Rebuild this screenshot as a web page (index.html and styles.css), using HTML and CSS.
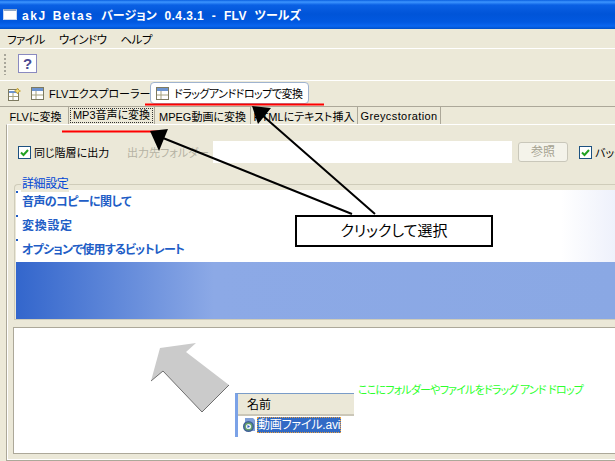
FILE: index.html
```html
<!DOCTYPE html>
<html lang="ja">
<head>
<meta charset="utf-8">
<title>akJ Betas</title>
<link rel="stylesheet" href="styles.css">
</head>
<body>
<div class="window">
  <header class="titlebar">
    <span class="app-icon"></span>
    <span class="title-text"><span class="latin">akJ Betas</span> <span class="kana">バージョン</span> 0.4.3.1 - FLV <span class="kana">ツールズ</span></span>
  </header>
  <nav class="menubar"><span>ファイル</span><span>ウインドウ</span><span>ヘルプ</span></nav>
  <div class="toolbar">
    <span class="grip"></span>
    <span class="help-btn">?</span>
  </div>
  <div class="main-tabs">
    <svg class="ico-new" width="13" height="13" viewBox="0 0 13 13"><rect x=".5" y="1.500" width="10" height="11" fill="#fff" stroke="#7d7a60"/><path d="M1 3h9v2H1z" fill="#6d94cf"/><path d="M1 8.500h9M5 5v7" stroke="#a5a17f"/><path d="M9.500 0l1 2 2 1-2 1-1 2-1-2-2-1 2-1z" fill="#f6e37a" stroke="#c09a2c" stroke-width=".7"/></svg>
    <span class="main-tab">
      <svg class="ico-table" width="13" height="13" viewBox="0 0 13 13"><rect x=".5" y=".5" width="12" height="12" fill="#fff" stroke="#7d7a60"/><rect x="1" y="1" width="11" height="3" fill="#6d94cf"/><path d="M1 8h11M5 4v8" stroke="#a5a17f"/></svg>
      FLVエクスプローラー
    </span>
    <span class="main-tab active">
      <svg class="ico-table" width="13" height="13" viewBox="0 0 13 13"><rect x=".5" y=".5" width="12" height="12" fill="#fff" stroke="#7d7a60"/><rect x="1" y="1" width="11" height="3" fill="#6d94cf"/><path d="M1 8h11M5 4v8" stroke="#a5a17f"/></svg>
      ドラッグアンドドロップで変換
    </span>
  </div>
  <div class="sub-tabs">
    <span class="sub-tab t1">FLVに変換</span>
    <span class="sub-tab t2"><span class="focus">MP3音声に変換</span></span>
    <span class="sub-tab t3">MPEG動画に変換</span>
    <span class="sub-tab t4">HTMLにテキスト挿入</span>
    <span class="sub-tab t5">Greycstoration</span>
  </div>
  <main class="panel">
    <div class="options">
      <label class="check c1"><span class="box"><svg width="9" height="9" viewBox="0 0 9 9"><path d="M1 4.500l2.500 2.500 4.500-5" fill="none" stroke="#21a121" stroke-width="2"/></svg></span>同じ階層に出力</label>
      <span class="out-label">出力先フォルダー</span>
      <span class="out-input"></span>
      <span class="browse">参照</span>
      <label class="check c2"><span class="box"><svg width="9" height="9" viewBox="0 0 9 9"><path d="M1 4.500l2.500 2.500 4.500-5" fill="none" stroke="#21a121" stroke-width="2"/></svg></span>バックアップ</label>
    </div>
    <section class="group">
      <div class="group-legend">詳細設定</div>
      <div class="group-body">
        <ul class="links">
          <li class="l1">音声のコピーに関して</li>
          <li class="l2">変換設定</li>
          <li class="l3">オプションで使用するビットレート</li>
        </ul>
        <div class="banner"></div>
      </div>
    </section>
    <section class="dropzone">
      <div class="file-list">
        <div class="list-head">名前</div>
        <div class="list-row">
          <svg width="14" height="16" viewBox="0 0 14 16"><path d="M3 1h8l2 2v11H3z" fill="#7f9fd8"/><circle cx="6.500" cy="9.500" r="5.500" fill="#3f5f98"/><circle cx="6.500" cy="9.500" r="4" fill="#63a06a"/><circle cx="6.500" cy="9.500" r="2.600" fill="#e8eef8"/><path d="M5.500 8l2.500 1.500L5.500 11z" fill="#2a5fc0"/></svg>
          <span class="file-name">動画ファイル.avi</span>
        </div>
      </div>
      <span class="drop-hint">ここにフォルダーやファイルをドラッグ アンド ドロップ</span>
    </section>
  </main>
</div>
<svg class="annotations" width="615" height="461" viewBox="0 0 615 461">
  <path d="M145 104.500H324M62 131.500H158" stroke="#f00" stroke-width="2" fill="none"/>
  <path d="M375 214L262 115M352 214L163 138" stroke="#000" stroke-width="2" fill="none"/>
  <path d="M252 106L271 108L258 124Z" fill="#000"/>
  <path d="M150 131L168 129L159 151Z" fill="#000"/>
  <path d="M160 348L196 343L186 352L229 385L202 412L163 371L151 381Z" fill="#cbcbcb"/>
  <path d="M229 385L202 412L163 371L151 381" fill="none" stroke="#6f6f6f" stroke-width="1"/>
</svg>
<div class="callout">クリックして選択</div>
</body>
</html>
```

FILE: styles.css
```css
* { box-sizing: border-box; }
html, body { margin: 0; padding: 0; }
body {
  width: 615px; height: 461px; overflow: hidden; position: relative;
  background: #ece9d8;
  font-family: "Liberation Sans", "Noto Sans CJK JP", sans-serif;
  font-feature-settings: "palt";
  font-size: 11px; color: #000;
}
.window { width: 615px; height: 461px; display: flex; flex-direction: column; overflow: hidden; }

.titlebar {
  height: 29px; flex: none; display: flex; align-items: center; gap: 5px; padding-left: 3px;
  background: linear-gradient(#0a5fe0 0, #3d95ff 2px, #0a60e4 5px, #0054d8 14px, #0158e0 22px, #0a66f0 26px, #0050c8 29px);
  color: #fff; font-weight: 700; font-size: 12px; white-space: pre;
}
.app-icon { width: 14px; height: 11px; background: #fff; border: 1px solid #c8d8f0; border-top: 2px solid #8fa8c8; }
.title-text { letter-spacing: .4px; word-spacing: 4px; }
.latin { letter-spacing: 1.6px; word-spacing: 1px; }
.kana { letter-spacing: 0; }

.menubar { height: 20px; flex: none; display: flex; align-items: center; gap: 14px; padding-left: 7px; border-bottom: 1px solid #fff; letter-spacing: -.5px; font-size: 11.500px; }
.toolbar { height: 32px; flex: none; display: flex; align-items: flex-start; padding: 5px 0 0 4px; border-bottom: 1px solid #fff; }
.grip { width: 2px; height: 21px; background: repeating-linear-gradient(#a8a69a 0 2px, transparent 2px 4px); }
.help-btn {
  width: 19px; height: 19px; margin-left: 12px; background: #fff; border: 1px solid #8a8ac0; color: #4a4a92;
  font: 700 15px/17px "Liberation Sans", sans-serif; text-align: center;
}

.main-tabs { height: 25px; flex: none; display: flex; align-items: flex-start; padding: 1px 0 0 8px; }
.ico-new { flex: none; margin: 6px 10px 0 0; }
.main-tab { display: inline-flex; align-items: center; gap: 5px; height: 22px; width: 119px; white-space: nowrap; }
.main-tab .ico-table { flex: none; }
.main-tab.active { background: #fff; border: 1px solid #9fb3cf; border-radius: 4px; width: 159px; padding-left: 5px; letter-spacing: -.5px; }

.sub-tabs { height: 18px; flex: none; display: flex; padding-left: 3px; border-top: 1px solid #aca899; }
.sub-tab { display: flex; align-items: center; justify-content: center; height: 17px; border-right: 1px solid #aca899; white-space: nowrap; }
.t1 { width: 66px; }
.t2 { width: 86px; }
.t3 { width: 96px; }
.t4 { width: 107px; }
.t5 { width: 83px; letter-spacing: .4px; }
.focus { display: block; width: 83px; height: 15px; line-height: 15px; text-align: center; outline: 1px dotted #333; outline-offset: -1px; }

.panel { flex: 1; min-height: 0; margin-left: 6px; border-left: 1px solid #aca899; border-bottom: 1px solid #aca899; border-top: 1px solid #fff; padding: 0 0 6px 0; display: flex; flex-direction: column; box-shadow: inset 1px 0 0 #fff, inset 0 -1px 0 #fff; background: #ebe8d8; }
.options { height: 59px; flex: none; display: flex; align-items: center; padding: 0 0 5px 11px; white-space: nowrap; overflow: hidden; }
.check { display: inline-flex; align-items: center; gap: 3px; }
.c1 { width: 109px; flex: none; }
.box { width: 13px; height: 13px; border: 1px solid #1c5180; background: #fff; display: flex; align-items: center; justify-content: center; flex: none; }
.out-label { color: #b5b2a3; width: 86px; flex: none; }
.out-input { width: 299px; height: 22px; background: #fff; flex: none; }
.browse { width: 50px; height: 20px; margin-left: 6px; border: 1px solid #c9c7ba; border-radius: 3px; background: #f4f3ea; color: #a5a290; text-align: center; line-height: 18px; font-size: 12px; flex: none; }
.c2 { margin-left: 11px; }

.group { flex: none; position: relative; margin-left: 7px; border-left: 1px solid #cfccba; border-top: 1px solid #cfccba; border-radius: 4px 0 0 0; padding: 5px 0 0 1px; box-shadow: 0 1px 0 #cfccba; }
.group-legend { position: absolute; left: 6px; top: -8px; background: #ebe8d8; color: #0046d5; padding: 0 1px; line-height: 15px; font-size: 12px; letter-spacing: -.4px; }
.links { list-style: none; margin: 0; padding: 0; height: 72px; background: linear-gradient(90deg, #fff 0, #fff 91%, #eef1fb 100%); color: #215dc6; font-weight: 700; font-size: 12px; display: flex; flex-direction: column; }
.links li { height: 24px; line-height: 25px; padding-left: 6px; position: relative; }
.links li::before { content: ""; position: absolute; left: 0; top: 1px; width: 2px; height: 2px; background: #215dc6; }
.l1 { letter-spacing: -.6px; }
.l2 { letter-spacing: .7px; }
.l3 { letter-spacing: -.8px; }
.banner { height: 57px; background: linear-gradient(90deg, #3366cc 0, #8ca9e6 33%, #8aa8e4 100%); }

.dropzone { flex: 1; min-height: 0; margin: 8px 0 0 6px; background: #fff; border: 1px solid #aca899; border-right: 0; position: relative; }
.file-list { position: absolute; left: 221px; top: 65px; width: 119px; height: 44px; border-top: 1px solid #7a9cc8; border-left: 3px solid #7ba2e7; font-size: 12px; }
.list-head { height: 22px; line-height: 23px; padding-left: 9px; background: #ebe8d8; border-bottom: 2px solid #cbc7b8; }
.list-row { display: flex; align-items: center; gap: 1px; padding-left: 4px; height: 17px; }
.list-row svg { flex: none; }
.file-name { background: #316ac5; color: #fff; outline: 1px dotted #e8a040; outline-offset: -1px; padding: 0 1px; line-height: 16px; white-space: nowrap; letter-spacing: -.2px; }
.drop-hint { position: absolute; left: 344px; top: 53px; color: #2dff2d; font-size: 11px; white-space: nowrap; letter-spacing: -.8px; }

.annotations { position: absolute; left: 0; top: 0; pointer-events: none; }
.callout {
  position: absolute; left: 295px; top: 215px; width: 198px; height: 32px;
  background: #fff; border: 2px solid #000; text-align: center; line-height: 27px; font-size: 15px;
}
```
